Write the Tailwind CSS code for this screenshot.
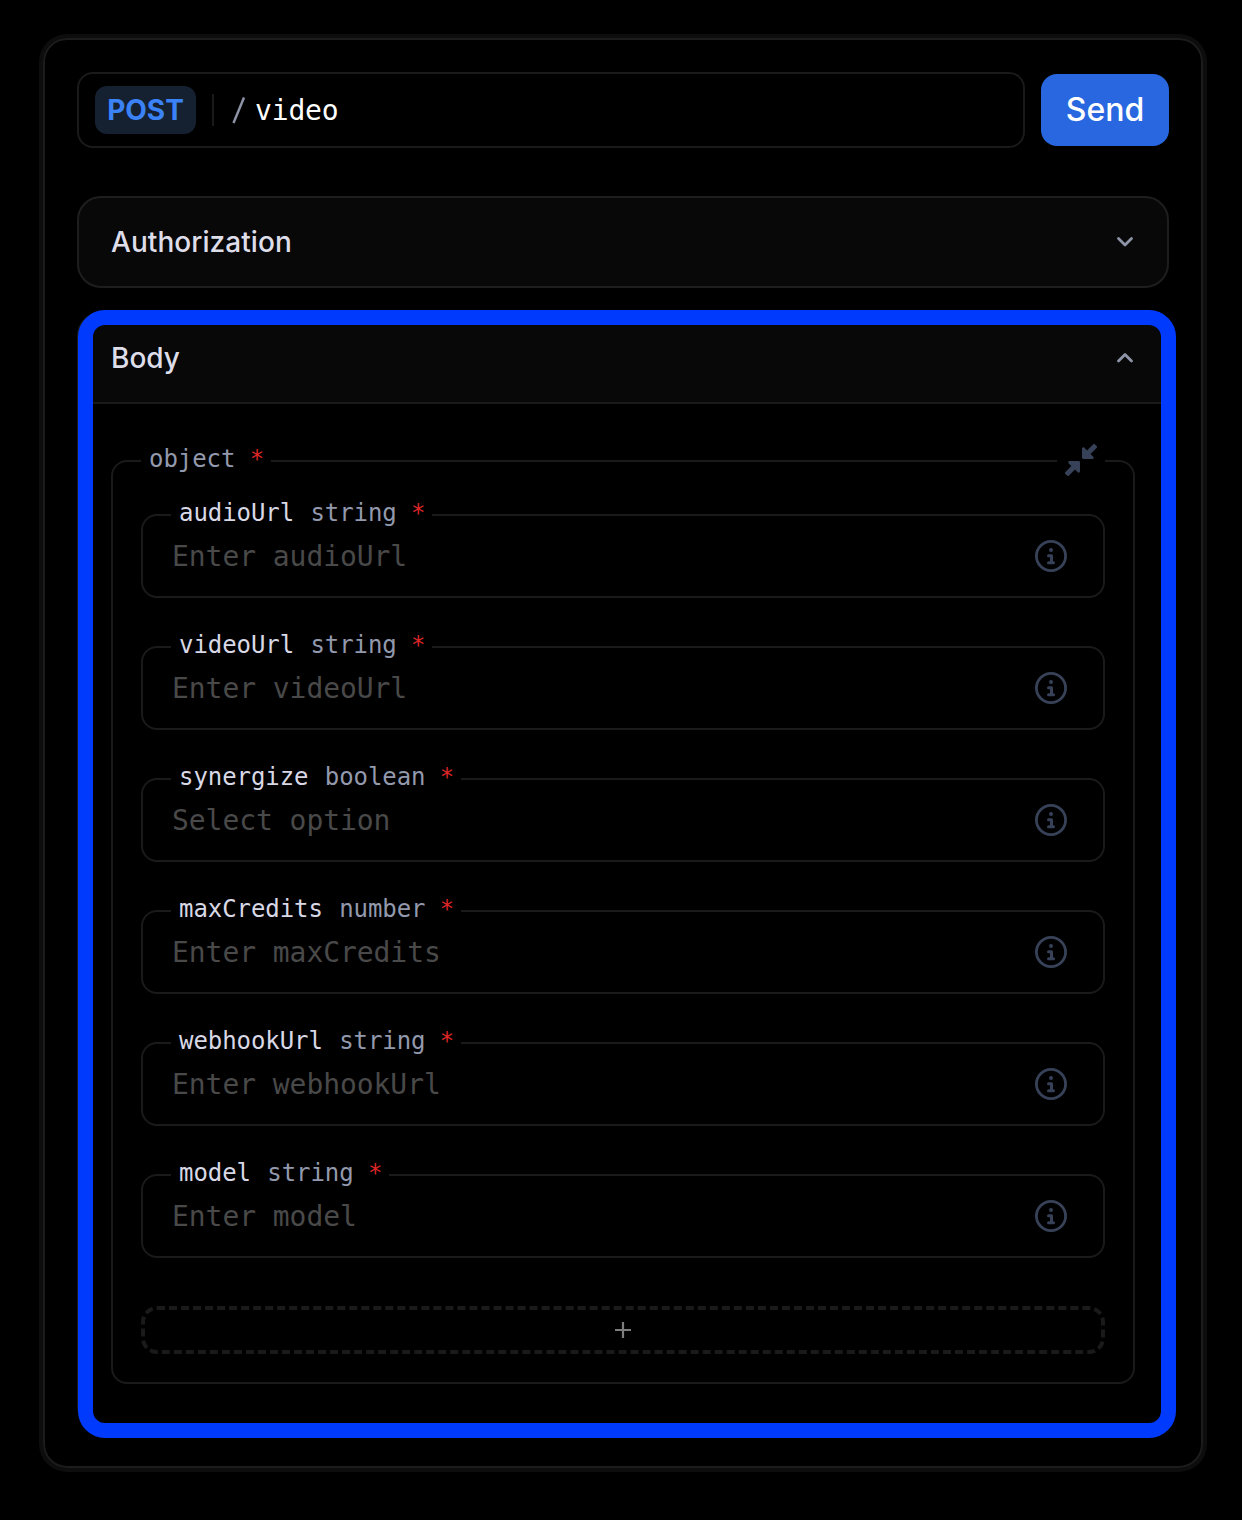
<!DOCTYPE html>
<html lang="en">
<head>
<meta charset="utf-8">
<title>API playground</title>
<script src="https://cdn.jsdelivr.net/npm/@tailwindcss/browser@4"></script>
</head>
<body class="bg-black h-[1520px] overflow-hidden pl-[43px] pt-[38px] font-['Inter',sans-serif]">
<main class="w-[1160px] h-[1430px] rounded-[24px] border-2 border-[#1c1c1c] ring-4 ring-[#0d0d0d] px-8 pt-8">
  <div class="flex items-center gap-4">
    <div class="flex items-center w-[948px] h-[76px] border-2 border-[#1a1a1a] rounded-2xl px-4">
      <span class="flex items-center justify-center w-[101px] h-12 rounded-xl bg-[#152131] text-[#3b82f6] text-[28px] font-bold">POST</span>
      <span class="w-0.5 h-8 bg-[#1a1a1a] ml-4"></span>
      <span class="ml-[18px] w-[14px] flex"><svg class="w-[14px] h-[28px]" viewBox="0 0 14 28" fill="none" stroke="#8f95a9" stroke-width="2.4"><path d="M12 1.500 1.500 27"/></svg></span>
      <span class="ml-[9px] pt-0.5 text-[28px] leading-8 text-white tracking-[-0.16px] font-['DejaVu_Sans_Mono',monospace]">video</span>
    </div>
    <button class="w-32 h-[72px] rounded-2xl bg-[#2867df] text-white text-[32px] font-medium">Send</button>
  </div>

  <section class="mt-12 w-[1092px] h-[92px] rounded-3xl border-2 border-[#1e1e1e] bg-[#080808] flex items-center justify-between px-8">
    <h2 class="text-[28px] font-medium tracking-[0.05px] text-[#dedeea]">Authorization</h2>
    <svg class="w-5 h-5" viewBox="0 0 20 20" fill="none" stroke="#8f95a9" stroke-width="2.800" stroke-linecap="round" stroke-linejoin="round"><path d="m3.500 6.500 6.500 6.500 6.500-6.500"/></svg>
  </section>

  <section class="relative mt-6 w-[1092px] h-[1118px] rounded-3xl border-2 border-[#1a1a1a]">
    <header class="h-[90px] rounded-t-[22px] border-b-2 border-[#1a1a1a] bg-[#080808] flex items-center justify-between px-8">
      <h2 class="text-[28px] font-medium text-[#dedeea]">Body</h2>
      <svg class="w-5 h-5" viewBox="0 0 20 20" fill="none" stroke="#8f95a9" stroke-width="2.800" stroke-linecap="round" stroke-linejoin="round"><path d="m3.500 13 6.500-6.500 6.500 6.500"/></svg>
    </header>
    <div class="relative mx-8 mt-14 w-[1024px] h-[924px] rounded-2xl border-2 border-[#1a1a1a] px-7 pt-[52px]">
      <div class="absolute left-7 -top-[19px] w-[130px] h-8 px-2 bg-black text-[24px] leading-8 tracking-[-0.05px] whitespace-pre text-[#9399ad] font-['DejaVu_Sans_Mono',monospace]">object <span class="text-[#dc2626]">*</span></div>
      <div class="absolute right-7 -top-[18px] w-12 h-8 px-2 bg-black">
        <svg class="w-8 h-8" viewBox="0 0 32 32" fill="#374258"><path d="M28 .4a1.4 1.4 0 0 1 2 0l1.600 1.600a1.400 1.400 0 0 1 0 2L25.500 10l2.700 2.700c.9.900.3 2.300-.9 2.300H18.400c-.8 0-1.400-.6-1.400-1.400V4.700c0-1.200 1.500-1.900 2.400-1L22 6.400ZM4.700 17h8.900c.8 0 1.400.6 1.400 1.400v8.900c0 1.200-1.500 1.900-2.400 1L10 25.600 4 31.600a1.400 1.400 0 0 1-2 0L.4 30a1.400 1.400 0 0 1 0-2l6-6-2.700-2.600C2.800 18.500 3.400 17 4.700 17Z"/></svg>
      </div>
      <div id="fields" class="flex flex-col gap-12"></div>
      <button class="mt-12 w-[964px] h-12 border-4 border-dashed border-[#1a1a1a] rounded-2xl flex items-center justify-center">
        <svg class="w-4 h-4" viewBox="0 0 16 16" stroke="#7d7d7d" stroke-width="2.200"><path d="M8 0v16M0 8h16"/></svg>
      </button>
    </div>
    <div class="absolute -left-px -top-1 w-[1098px] h-[1128px] border-[15px] border-[#003bfd] rounded-[27px]"></div>
  </section>
</main>
<script>
const fields = [
  ['audioUrl', 'string', 'Enter audioUrl'],
  ['videoUrl', 'string', 'Enter videoUrl'],
  ['synergize', 'boolean', 'Select option'],
  ['maxCredits', 'number', 'Enter maxCredits'],
  ['webhookUrl', 'string', 'Enter webhookUrl'],
  ['model', 'string', 'Enter model'],
];
document.getElementById('fields').innerHTML = fields.map(([name, type, hint]) => `
<div class="relative w-[964px] h-[84px] rounded-2xl border-2 border-[#1a1a1a] flex items-center justify-between pl-[29px] pr-9 font-['DejaVu_Sans_Mono',monospace]">
  <div class="absolute left-7 -top-[19px] h-8 pl-2 pr-[7px] bg-black text-[24px] leading-8 tracking-[-0.07px] whitespace-pre text-[#d8d8e6]">${name}<span class="text-[#9399ad] ml-[2px]"> ${type} </span><span class="text-[#dc2626]">*</span></div>
  <span class="pt-0.5 text-[28px] leading-8 tracking-[-0.06px] text-[#494949]">${hint}</span>
  <svg class="w-8 h-8" viewBox="0 0 32 32" fill="none"><circle cx="16" cy="16" r="14.600" stroke="#374258" stroke-width="2.800"/><circle cx="16" cy="10" r="2" fill="#374258"/><path d="M13.500 15.700h3v7M13.500 22.700h5" stroke="#374258" stroke-width="3" stroke-linecap="round" stroke-linejoin="round"/></svg>
</div>`).join('');
</script>
</body>
</html>
